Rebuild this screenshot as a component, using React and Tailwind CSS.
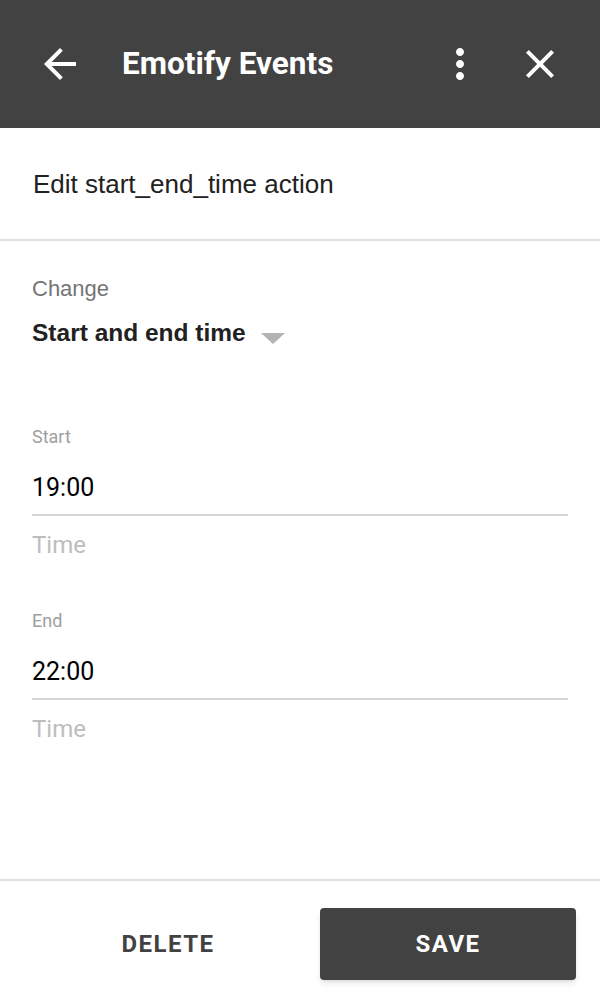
import React from 'react';

const Icon = ({ d, className = '' }) => (
  <svg className={className} width="48" height="48" viewBox="0 0 24 24" fill="white">
    <path d={d} />
  </svg>
);

const Field = ({ label, value }) => (
  <div className="flex flex-col">
    <div className="text-[18px] leading-[20px] text-[#9e9e9e]">{label}</div>
    <div className="mt-[26px] text-[25px] leading-[30px] text-black">{value}</div>
    <div className="mt-[11px] h-[2px] bg-[#d6d6d6]" />
    <div className="mt-[14px] text-[24px] leading-[30px] text-[#bdbdbd]">Time</div>
  </div>
);

const App = () => {
  return (
    <div className="w-[600px] h-[1008px] bg-white flex flex-col" style={{ fontFamily: 'Roboto, "Noto Sans", sans-serif' }}>
      <div className="h-[128px] bg-[#424242] flex items-center px-[36px] text-white shrink-0">
        <Icon d="M20 11H7.83l5.59-5.59L12 4l-8 8 8 8 1.41-1.41L7.83 13H20v-2z" />
        <div className="ml-[38px] text-[31.5px] font-bold">Emotify Events</div>
        <div className="ml-auto flex items-center">
          <Icon d="M12 8c1.1 0 2-.9 2-2s-.9-2-2-2-2 .9-2 2 .9 2 2 2zm0 2c-1.1 0-2 .9-2 2s.9 2 2 2 2-.9 2-2-.9-2-2-2zm0 6c-1.1 0-2 .9-2 2s.9 2 2 2 2-.9 2-2-.9-2-2-2z" />
          <Icon className="ml-[32px]" d="M19 6.41L17.59 5 12 10.59 6.41 5 5 6.41 10.59 12 5 17.59 6.41 19 12 13.41 17.59 19 19 17.59 13.41 12z" />
        </div>
      </div>

      <div className="h-[113px] pt-[41px] px-[33px] border-b-2 border-[#e0e0e0] shrink-0 font-['Liberation_Sans',Arial,sans-serif] text-[26px] leading-[30px] text-[#212121]">
        Edit start_end_time action
      </div>

      <div className="flex-1 px-[32px] pt-[33px]">
        <div className="font-['Liberation_Sans',Arial,sans-serif]">
          <div className="text-[22px] leading-[30px] text-[#757575]">Change</div>
          <div className="flex items-start">
            <span className="mt-[14px] text-[24.5px] leading-[30px] font-bold text-[#212121]">Start and end time</span>
            <span className="ml-[15px] mt-[29px] w-0 h-0 border-l-[12px] border-r-[12px] border-t-[11px] border-l-transparent border-r-transparent border-t-[#b3b3b3]" />
          </div>
        </div>

        <div className="mt-[79px] flex flex-col gap-[51px]">
          <Field label="Start" value="19:00" />
          <Field label="End" value="22:00" />
        </div>
      </div>

      <div className="h-[129px] border-t-2 border-[#e0e0e0] flex items-start pt-[27px] pl-[40px] shrink-0">
        <button className="w-[256px] h-[72px] text-[24px] font-bold text-[#424242] tracking-[1.5px]">DELETE</button>
        <button className="ml-[24px] w-[256px] h-[72px] bg-[#424242] rounded-[4px] shadow-md text-[24px] font-bold text-white tracking-[1.5px]">SAVE</button>
      </div>
    </div>
  );
};

export default App;
